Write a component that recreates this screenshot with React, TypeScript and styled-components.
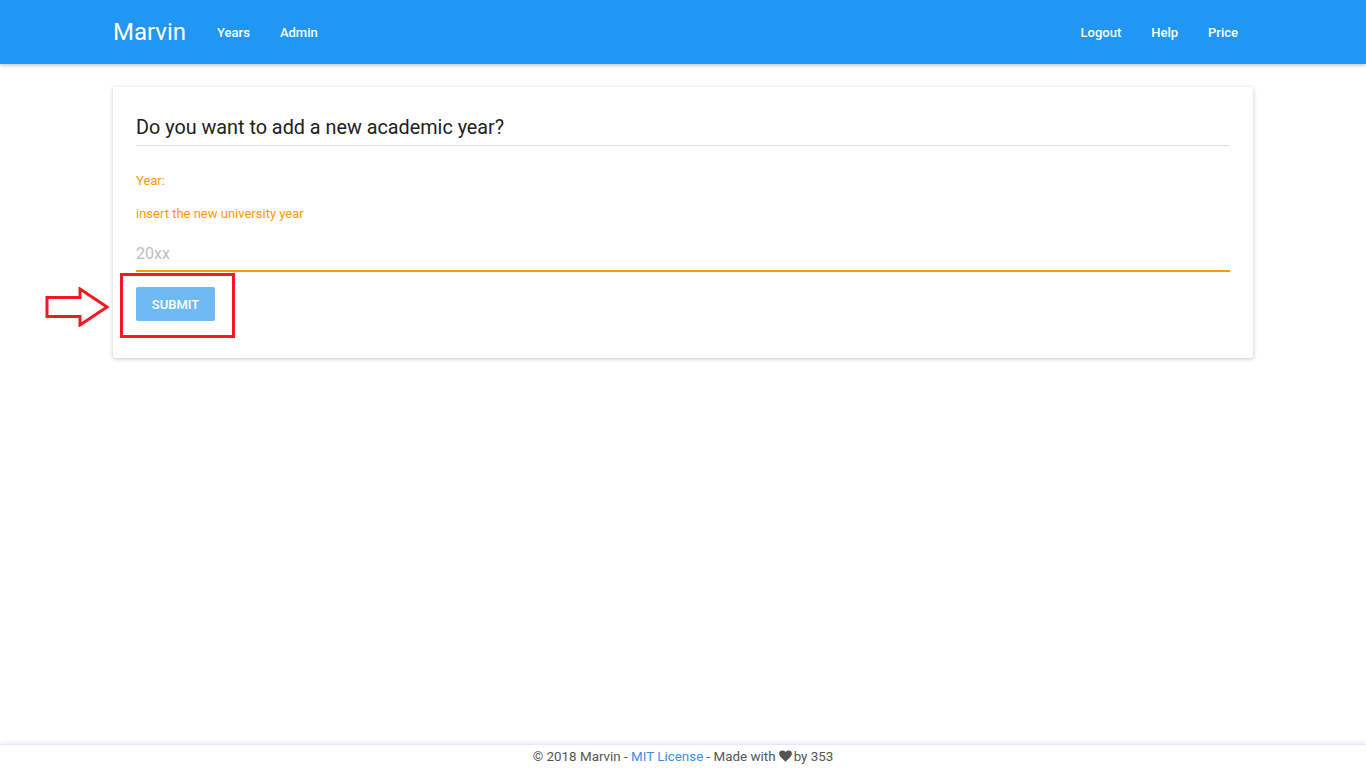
import React from "react";
import styled, { createGlobalStyle } from "styled-components";

const Global = createGlobalStyle`
  html, body { margin: 0; padding: 0; background: #fff; }
  body { font-family: Roboto, "Noto Sans", Arial, sans-serif; color: #212121; }
  * { box-sizing: border-box; }
`;

const Page = styled.div`
  min-height: 768px;
  display: flex;
  flex-direction: column;
`;

const NavBar = styled.header`
  height: 64px;
  background: #2196f3;
  box-shadow: 0 2px 3px rgba(0, 0, 0, 0.2);
  position: relative;
  z-index: 2;
`;

const Container = styled.div`
  width: 1140px;
  margin: 0 auto;
`;

const NavInner = styled(Container)`
  height: 100%;
  display: flex;
  align-items: center;
  padding-top: 1px;
`;

const Brand = styled.a`
  color: #fff;
  font-size: 24px;
  font-weight: 400;
  margin-right: 16px;
  line-height: 1;
  padding-bottom: 1px;
`;

const NavLink = styled.a`
  color: #fff;
  font-size: 13px;
  font-weight: 500;
  padding: 0 15px;
`;

const Spacer = styled.div`
  flex: 1;
`;

const RightNav = styled.nav`
  display: flex;
`;

const Main = styled.main`
  flex: 1;
  padding-top: 23px;
`;

const Card = styled.section`
  background: #fff;
  border-radius: 2px;
  box-shadow: 0 1px 4px rgba(0, 0, 0, 0.22);
  padding: 23px 23px 37px;
  position: relative;
`;

const Title = styled.h2`
  margin: 0;
  font-size: 19.8px;
  font-weight: 400;
  color: #212121;
  padding: 6px 0 5px;
  border-bottom: 1px solid #e0e0e0;
  line-height: 24px;
`;

const Label = styled.div<{ $top: number }>`
  color: #ff9800;
  font-size: 13px;
  margin-top: ${(p) => p.$top}px;
  line-height: 16px;
`;

const Input = styled.input`
  display: block;
  width: 100%;
  border: none;
  border-bottom: 2px solid #ff9800;
  outline: none;
  font-family: Roboto, Arial, sans-serif;
  font-size: 16px;
  color: #212121;
  padding: 0 0 7px;
  margin-top: 22px;
  background: transparent;
  &::placeholder { color: #bdbdbd; }
`;

const ButtonRow = styled.div`
  margin-top: 15px;
  position: relative;
`;

const SubmitButton = styled.button`
  display: block;
  background: #6ebaf7;
  color: #fff;
  border: none;
  border-radius: 2px;
  font-family: Roboto, Arial, sans-serif;
  font-size: 13px;
  font-weight: 500;
  text-transform: uppercase;
  width: 79px;
  height: 34px;
  padding: 0;
`;

const Highlight = styled.div`
  position: absolute;
  left: -16px;
  top: -14px;
  width: 115px;
  height: 65px;
  border: 3px solid #ed1c24;
  pointer-events: none;
`;

const Arrow = styled.svg`
  position: absolute;
  left: -91px;
  top: 0px;
`;

const Footer = styled.footer`
  height: 24px;
  border-top: 1px solid #e8e6fb;
  box-shadow: 0 -2px 4px rgba(120, 110, 240, 0.12);
  text-align: center;
  font-size: 13.4px;
  color: #555;
  line-height: 24px;
`;

const FooterLink = styled.a`
  color: #3a8ee6;
`;

const Heart = styled.svg`
  display: inline-block;
  vertical-align: -1px;
  margin: 0 2px 0 3px;
`;

export default function App() {
  return (
    <Page>
      <Global />
      <NavBar>
        <NavInner>
          <Brand>Marvin</Brand>
          <NavLink>Years</NavLink>
          <NavLink>Admin</NavLink>
          <Spacer />
          <RightNav>
            <NavLink>Logout</NavLink>
            <NavLink>Help</NavLink>
            <NavLink>Price</NavLink>
          </RightNav>
        </NavInner>
      </NavBar>
      <Main>
        <Container>
          <Card>
            <Title>Do you want to add a new academic year?</Title>
            <Label $top={27}>Year:</Label>
            <Label $top={17}>insert the new university year</Label>
            <Input placeholder="20xx" />
            <ButtonRow>
              <SubmitButton>Submit</SubmitButton>
              <Highlight />
              <Arrow width="66" height="40" viewBox="0 0 66 40">
                <path
                  d="M2 10.5 H35 V2 L62 20 L35 38 V29.5 H2 Z"
                  fill="none"
                  stroke="#ed1c24"
                  strokeWidth="3"
                  strokeLinejoin="miter"
                />
              </Arrow>
            </ButtonRow>
          </Card>
        </Container>
      </Main>
      <Footer>
        © 2018 Marvin - <FooterLink>MIT License</FooterLink> - Made with
        <Heart width="13" height="12" viewBox="0 0 24 22">
          <path
            d="M12 21.5 L2.6 12.2 C-0.6 9 -0.6 4.2 2.6 1.9 C5.4 -0.1 9.4 0.6 12 3.6 C14.6 0.6 18.6 -0.1 21.4 1.9 C24.6 4.2 24.6 9 21.4 12.2 Z"
            fill="#555"
          />
        </Heart>
        by 353
      </Footer>
    </Page>
  );
}
